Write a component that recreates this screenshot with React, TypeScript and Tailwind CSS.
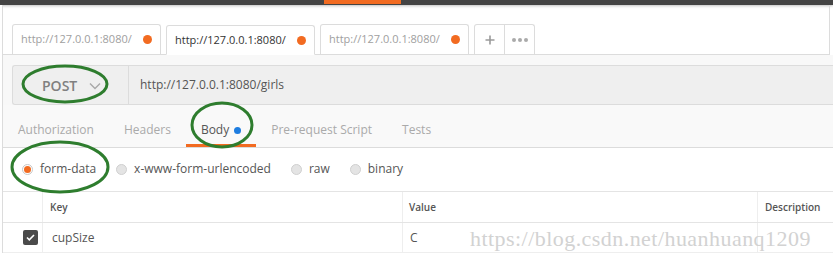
import React from 'react';

const urlTabs = [
    { label: 'http://127.0.0.1:8080/', active: false },
    { label: 'http://127.0.0.1:8080/', active: true },
    { label: 'http://127.0.0.1:8080/', active: false },
];

const reqTabs = ['Authorization', 'Headers', 'Body', 'Pre-request Script', 'Tests'];

const bodyModes = ['form-data', 'x-www-form-urlencoded', 'raw', 'binary'];

const App = () => {
    return (
        <div className="relative w-[833px] h-[257px] overflow-hidden bg-white font-['Open_Sans',sans-serif]">
            {/* top app bar */}
            <div className="h-[5px] bg-[#444] shadow-[0_1px_3px_rgba(0,0,0,0.25)]">
                <div className="ml-[324px] w-[77px] h-[4px] bg-[#f26b21]" />
            </div>

            <div className="flex">
                {/* left gutter */}
                <div className="w-[3px] border-r border-[#dcdcdc] bg-white" />

                <div className="flex-1">
                    {/* url tabs */}
                    <div className="flex items-end h-[50px] pl-[9px] mr-[3px] border-r border-b border-[#dcdcdc] gap-[5px]">
                        {urlTabs.map((t, i) => (
                            <div
                                key={i}
                                className={`flex items-center justify-between w-[149px] h-[30px] pl-[8px] pr-[8px] border border-[#dcdcdc] rounded-t-[3px] bg-white text-[11px] ${t.active ? '-mb-px border-b-white text-[#333]' : 'border-b-0 text-[#a0a0a0]'}`}
                            >
                                <span>{t.label}</span>
                                <span className="w-[9px] h-[9px] rounded-full bg-[#f26b21]" />
                            </div>
                        ))}
                        <div className="flex h-[30px] border border-b-0 border-[#dcdcdc] rounded-t-[3px] bg-white">
                            <div className="flex items-center justify-center w-[30px] border-r border-[#dcdcdc] text-[#999]">
                                <svg width="10" height="10" viewBox="0 0 10 10">
                                    <path d="M5 0.5V9.5M0.5 5H9.5" stroke="#9a9a9a" strokeWidth="1.6" />
                                </svg>
                            </div>
                            <div className="flex items-center justify-center gap-[2px] w-[29px]">
                                <span className="w-[4px] h-[4px] rounded-full bg-[#aaa]" />
                                <span className="w-[4px] h-[4px] rounded-full bg-[#aaa]" />
                                <span className="w-[4px] h-[4px] rounded-full bg-[#aaa]" />
                            </div>
                        </div>
                    </div>

                    {/* url bar */}
                    <div className="bg-[#f8f8f8] pt-[10px] pl-[9px]">
                        <div className="flex h-[40px] border border-r-0 border-[#dcdcdc] rounded-l-[3px] bg-[#efefef]">
                            <div className="flex items-center w-[116px] pl-[29px] pt-[1px] border-r border-[#dcdcdc]">
                                <span className="text-[14px] font-semibold text-[#808080]">POST</span>
                                <svg className="ml-[12px]" width="12" height="8" viewBox="0 0 12 8">
                                    <path d="M1 1.5L6 6.5L11 1.5" fill="none" stroke="#a8a8a8" strokeWidth="1.4" />
                                </svg>
                            </div>
                            <div className="flex items-center pl-[11px] text-[12px] text-[#555]">
                                http://127.0.0.1:8080/girls
                            </div>
                        </div>
                    </div>

                    {/* request tabs */}
                    <div className="flex h-[43px] bg-[#f9f9f9] border-b border-[#dcdcdc]">
                        {reqTabs.map((t) => (
                            <div
                                key={t}
                                className={`flex items-center px-[15px] pt-[11px] text-[12px] ${t === 'Body' ? 'text-[#555] border-b-[3px] border-[#f26b21]' : 'text-[#aaa] pb-[3px]'}`}
                            >
                                {t}
                                {t === 'Body' && <span className="ml-[5px] w-[7px] h-[7px] rounded-full bg-[#1e7de0]" />}
                            </div>
                        ))}
                    </div>

                    {/* body modes */}
                    <div className="flex items-center h-[36px] pt-[6px] pl-[19px] gap-[20px]">
                        {bodyModes.map((m, i) => (
                            <label key={m} className="flex items-center gap-[7px] text-[12px] text-[#555]">
                                <span className={`flex items-center justify-center w-[11px] h-[11px] rounded-full border ${i === 0 ? 'border-[#c8c8c8] bg-white' : 'border-[#d0d0d0] bg-[#e4e4e4]'}`}>
                                    {i === 0 && <span className="w-[7px] h-[7px] rounded-full bg-[#f26b21]" />}
                                </span>
                                {m}
                            </label>
                        ))}
                    </div>

                    {/* params table */}
                    <div className="mt-[7px] border-t border-[#e4e4e4]">
                        <div className="flex h-[31px] border-b border-[#e4e4e4] text-[10px] font-semibold text-[#555]">
                            <div className="w-[40px] border-r border-[#eeeeee]" />
                            <div className="flex items-center w-[360px] pl-[7px] border-r border-[#eeeeee]">Key</div>
                            <div className="flex items-center w-[355px] pl-[6px] border-r border-[#eeeeee]">Value</div>
                            <div className="flex items-center pl-[7px]">Description</div>
                        </div>
                        <div className="flex h-[30px] border-b border-[#eeeeee] text-[12px] text-[#555]">
                            <div className="flex items-center justify-end pr-[4px] w-[40px] border-r border-[#eeeeee]">
                                <span className="flex items-center justify-center w-[15px] h-[15px] rounded-[2px] bg-[#4a4a4a]">
                                    <svg width="9" height="7" viewBox="0 0 9 7">
                                        <path d="M1 3.5L3.3 5.8L8 1" fill="none" stroke="#fff" strokeWidth="1.6" />
                                    </svg>
                                </span>
                            </div>
                            <div className="flex items-center w-[360px] pl-[9px] border-r border-[#eeeeee]">cupSize</div>
                            <div className="flex items-center w-[355px] pl-[7px] border-r border-[#eeeeee]">C</div>
                            <div />
                        </div>
                    </div>
                </div>
            </div>

            {/* watermark */}
            <div className="absolute left-[470px] top-[224px] text-[22px] leading-[30px] text-[#d2d2d2] font-['Liberation_Serif',serif] tracking-[0.45px] pointer-events-none">
                https://blog.csdn.net/huanhuanq1209
            </div>

            {/* annotation circles */}
            <svg className="absolute left-0 top-0 pointer-events-none" width="833" height="257">
                <ellipse cx="65" cy="84" rx="42" ry="18" fill="none" stroke="#2e7d2e" strokeWidth="3" />
                <ellipse cx="222" cy="125" rx="30" ry="22" fill="none" stroke="#2e7d2e" strokeWidth="3" />
                <ellipse cx="60" cy="167" rx="48" ry="25" fill="none" stroke="#2e7d2e" strokeWidth="3" />
            </svg>
        </div>
    );
};

export default App;
